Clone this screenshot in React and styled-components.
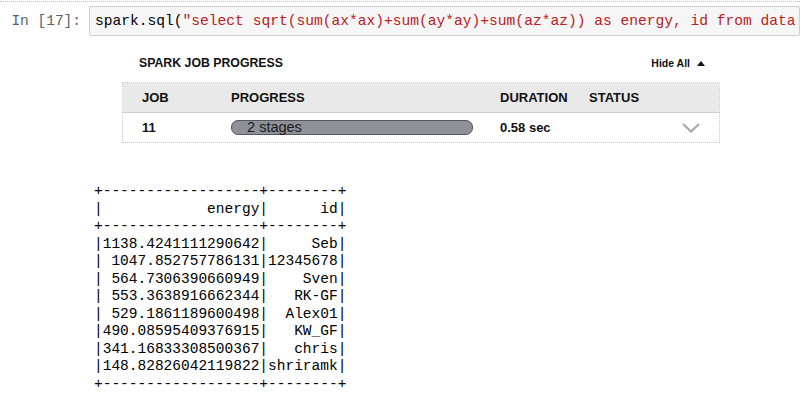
import React from "react";
import styled, { createGlobalStyle } from "styled-components";

const Global = createGlobalStyle`
  html, body { margin: 0; padding: 0; background: #fff; }
  body { width: 800px; height: 409px; overflow: hidden; }
`;

const Page = styled.div`
  width: 800px;
  height: 409px;
  overflow: hidden;
  border-top: 1px dotted #bdbdbd;
  margin-top: 1px;
  box-sizing: border-box;
`;

const InputRow = styled.div`
  display: flex;
  align-items: flex-start;
  margin-top: 4px;
`;

const Prompt = styled.div`
  width: 81px;
  flex: none;
  text-align: right;
  padding-right: 8px;
  padding-top: 7px;
  font-family: "Liberation Mono", monospace;
  font-size: 14.5px;
  line-height: 17px;
  color: #5b5f66;
  white-space: pre;
`;

const CodeBox = styled.div`
  flex: 1;
  height: 30px;
  box-sizing: border-box;
  background: #f6f6f6;
  border: 1px solid #cfcfcf;
  border-radius: 2px;
  padding: 6px 0 0 5px;
  overflow: hidden;
`;

const CodeLine = styled.div`
  font-family: "Liberation Mono", monospace;
  font-size: 14.6px;
  line-height: 17px;
  white-space: pre;
  overflow: hidden;
  max-width: 700px;
  color: #000;
`;

const Str = styled.span`
  color: #ba2121;
`;

const Widget = styled.div`
  margin: 21px 0 0 122px;
  width: 598px;
  font-family: "Liberation Sans", Arial, sans-serif;
`;

const WidgetHeader = styled.div`
  display: flex;
  justify-content: space-between;
  align-items: center;
  padding: 0 15px 0 17px;
  height: 12px;
`;

const WidgetTitle = styled.div`
  font-weight: bold;
  font-size: 12.3px;
  color: #111;
`;

const HideAll = styled.div`
  font-weight: bold;
  font-size: 10.5px;
  color: #111;
  display: flex;
  align-items: center;
  gap: 7px;
`;

const Table = styled.div`
  margin-top: 13px;
  border: 1px dotted #c9c9c9;
`;

const Row = styled.div`
  display: grid;
  grid-template-columns: 89px 269px 89px 1fr;
  align-items: center;
  padding-left: 19px;
  height: 29px;
  background: ${(p) => (p.$head ? "#e9e9e9" : "#fff")};
  border-bottom: ${(p) => (p.$head ? "1px solid #cdcdcd" : "none")};
  font-size: 13px;
  font-weight: bold;
  color: #111;
`;

const Progress = styled.div`
  width: 242px;
  height: 15px;
  box-sizing: border-box;
  border: 1px solid #55585e;
  border-radius: 7px;
  background: #8e9197;
  font-weight: normal;
  font-size: 14.5px;
  line-height: 13px;
  color: #1a1a1a;
  padding-left: 7px;
  white-space: pre;
`;

const ChevronCell = styled.div`
  display: flex;
  justify-content: flex-end;
  padding-right: 19px;
`;

const Output = styled.pre`
  margin: 40px 0 0 94px;
  font-family: "Liberation Mono", monospace;
  font-size: 14.5px;
  line-height: 17.5px;
  color: #000;
`;

const outputText = `+------------------+--------+
|            energy|      id|
+------------------+--------+
|1138.4241111290642|     Seb|
| 1047.852757786131|12345678|
| 564.7306390660949|    Sven|
| 553.3638916662344|   RK-GF|
| 529.1861189600498|  Alex01|
|490.08595409376915|   KW_GF|
|341.16833308500367|   chris|
|148.82826042119822|shriramk|
+------------------+--------+`;

export default function App() {
  return (
    <Page>
      <Global />
      <InputRow>
        <Prompt>In [17]:</Prompt>
        <CodeBox>
          <CodeLine>
            spark.sql(<Str>"select sqrt(sum(ax*ax)+sum(ay*ay)+sum(az*az)) as energy, id from data"</Str>
          </CodeLine>
        </CodeBox>
      </InputRow>
      <Widget>
        <WidgetHeader>
          <WidgetTitle>SPARK JOB PROGRESS</WidgetTitle>
          <HideAll>
            Hide All
            <svg width="8" height="5" viewBox="0 0 8 5">
              <path d="M0 5 L4 0 L8 5 Z" fill="#111" />
            </svg>
          </HideAll>
        </WidgetHeader>
        <Table>
          <Row $head>
            <div>JOB</div>
            <div>PROGRESS</div>
            <div>DURATION</div>
            <div>STATUS</div>
          </Row>
          <Row>
            <div>11</div>
            <div>
              <Progress>  2 stages</Progress>
            </div>
            <div>0.58 sec</div>
            <ChevronCell>
              <svg width="18" height="10" viewBox="0 0 18 10">
                <path d="M1 1 L9 8.5 L17 1" fill="none" stroke="#a8a8a8" strokeWidth="2.2" />
              </svg>
            </ChevronCell>
          </Row>
        </Table>
      </Widget>
      <Output>{outputText}</Output>
    </Page>
  );
}
